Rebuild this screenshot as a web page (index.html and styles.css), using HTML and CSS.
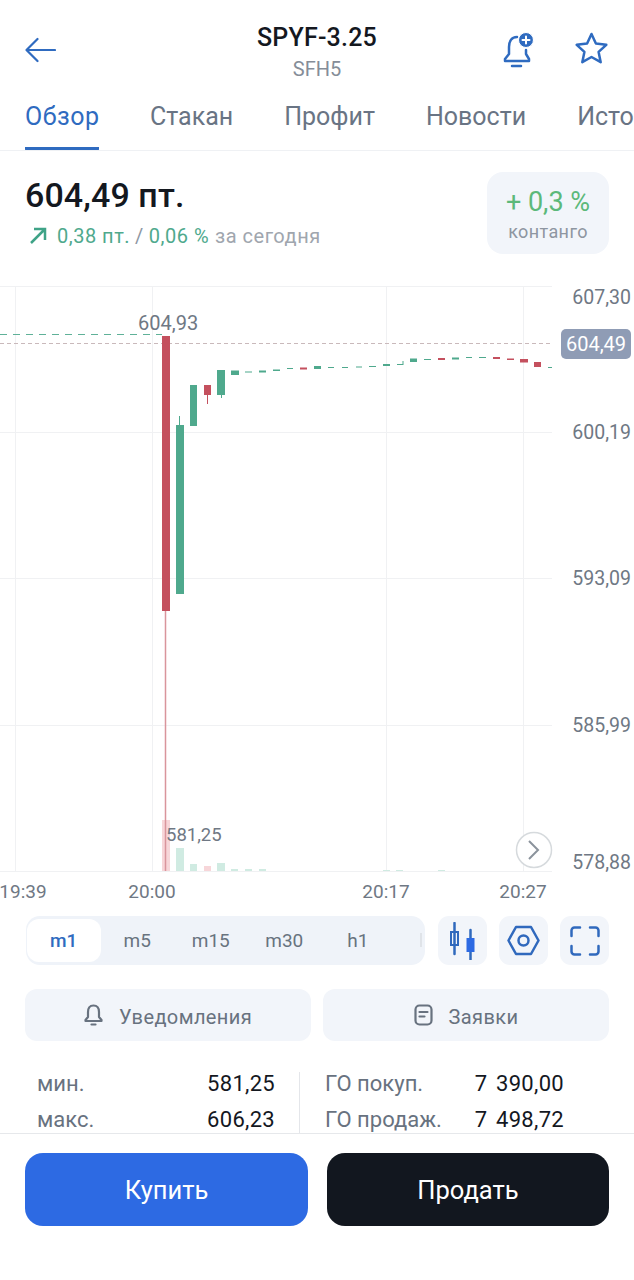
FILE: index.html
```html
<!DOCTYPE html>
<html lang="ru">
<head>
    <meta charset="UTF-8">
    <meta name="viewport" content="width=device-width, initial-scale=1.0">
    <title>SPYF-3.25</title>
    <link rel="stylesheet" href="styles.css">
</head>
<body>
    <header class="topbar">
        <svg class="back" width="31" height="26" viewBox="0 0 31 26">
            <path d="M30 13H1.500M12.500 2L1.500 13l11 11"/>
        </svg>
        <div class="topbar-title">
            <div class="ticker">SPYF-3.25</div>
            <div class="code">SFH5</div>
        </div>
        <div class="topbar-icons">
            <svg class="ico" width="32" height="36" viewBox="0 0 32 36">
                <path d="M15 5C9 5 7 10 7 15v7l-4 5v2h24v-2l-3-5v-4"/>
                <path d="M10 34h9"/>
                <circle class="plus-bg" cx="24" cy="8" r="7.500"/>
                <path class="plus" d="M24 4.500v7M20.500 8h7"/>
            </svg>
            <svg class="ico" width="33" height="32" viewBox="0 0 33 32">
                <path d="M16.500 2l4.400 9.600 10.400 1.200-7.700 7.100 2.100 10.300-9.200-5.200-9.200 5.200 2.100-10.300-7.700-7.100 10.400-1.200z"/>
            </svg>
        </div>
    </header>

    <nav class="tabs">
        <div class="tab active">Обзор</div>
        <div class="tab">Стакан</div>
        <div class="tab">Профит</div>
        <div class="tab">Новости</div>
        <div class="tab">Исто</div>
    </nav>

    <section class="quote">
        <div>
            <div class="price">604,49 пт.</div>
            <div class="change">
                <svg class="arrow" width="18" height="18" viewBox="0 0 18 18">
                    <path d="M2 16L16 2M5 2h11v11"/>
                </svg>
                <span class="up">0,38 пт.</span>
                <span class="slash">/</span>
                <span class="up">0,06 %</span>
                <span class="muted">за сегодня</span>
            </div>
        </div>
        <div class="contango">
            <div class="contango-val">+ 0,3 %</div>
            <div class="contango-label">контанго</div>
        </div>
    </section>

    <section class="chart">
        <!-- viewBox y starts at 270, so y values are page pixels -->
        <svg class="chart-svg" width="634" height="635" viewBox="0 270 634 635">
            <g class="grid">
                <path d="M0 286.500H552M0 432.500H552M0 578.500H552M0 725.500H552M0 871.500H552"/>
                <path d="M15.500 286V871M152.500 286V871M386.500 286V871M523.500 286V871"/>
            </g>

            <!-- volume -->
            <g class="vol-red">
                <rect x="162" y="820" width="8" height="51"/>
                <rect x="204" y="866" width="7" height="5"/>
            </g>
            <g class="vol-green">
                <rect x="176" y="848" width="8" height="23"/>
                <rect x="190" y="864" width="7" height="7"/>
                <rect x="217" y="863" width="8" height="8"/>
                <rect x="231" y="869" width="7" height="2"/>
                <rect x="245" y="869" width="7" height="2"/>
                <rect x="259" y="869" width="7" height="2"/>
                <rect x="383" y="870" width="7" height="1"/>
                <rect x="396" y="870" width="7" height="1"/>
                <rect x="438" y="870" width="7" height="1"/>
            </g>

            <path class="last-line" d="M0 343.500H552"/>
            <path class="high-line" d="M0 334.500H162"/>

            <!-- wicks -->
            <path class="wick-pale" d="M165.500 610V871"/>
            <path class="wick-green" d="M179.500 416V426M221.500 395V398M403 361V365"/>
            <path class="wick-red" d="M207.500 395V404"/>

            <g class="candle-red">
                <rect x="162" y="336" width="8" height="275"/>
                <rect x="204" y="385" width="7" height="10"/>
                <rect x="300" y="367.500" width="7" height="2"/>
                <rect x="438" y="358" width="7" height="2"/>
                <rect x="493" y="357" width="7" height="2"/>
                <rect x="507" y="358.500" width="7" height="1.500"/>
                <rect x="520" y="359" width="8" height="3.500"/>
                <rect x="534" y="362" width="7" height="5"/>
            </g>
            <g class="candle-green">
                <rect x="176" y="425" width="8" height="169"/>
                <rect x="190" y="385" width="7" height="41"/>
                <rect x="217" y="370" width="8" height="25"/>
                <rect x="231" y="370.500" width="8" height="4.500"/>
                <rect x="245" y="371.500" width="7" height="1"/>
                <rect x="259" y="370.500" width="7" height="2"/>
                <rect x="273" y="369.500" width="7" height="1.500"/>
                <rect x="287" y="368" width="6" height="1"/>
                <rect x="314" y="366" width="7" height="3"/>
                <rect x="328" y="367" width="6" height="1"/>
                <rect x="342" y="367" width="6" height="1"/>
                <rect x="356" y="366.500" width="6" height="1"/>
                <rect x="369" y="366" width="7" height="1"/>
                <rect x="383" y="364" width="7" height="2"/>
                <rect x="397" y="364" width="6" height="1"/>
                <rect x="410" y="358.500" width="7" height="3.500"/>
                <rect x="424" y="359" width="7" height="1"/>
                <rect x="452" y="357.500" width="7" height="2"/>
                <rect x="466" y="357" width="6" height="1"/>
                <rect x="479" y="357" width="7" height="1"/>
                <rect x="548" y="367" width="4" height="1"/>
            </g>

            <text class="mark" x="138" y="330">604,93</text>
            <text class="mark-low" x="166" y="841">581,25</text>

            <g class="axis-y">
                <text x="631" y="304">607,30</text>
                <text x="631" y="439">600,19</text>
                <text x="631" y="585">593,09</text>
                <text x="631" y="732">585,99</text>
                <text x="631" y="869">578,88</text>
            </g>
            <rect class="last-box" x="561" y="329" width="70" height="30" rx="5"/>
            <text class="last-text" x="596" y="351">604,49</text>

            <g class="axis-x">
                <text x="23" y="898">19:39</text>
                <text x="152" y="898">20:00</text>
                <text x="386" y="898">20:17</text>
                <text x="523" y="898">20:27</text>
            </g>

            <circle class="go-end" cx="534" cy="850" r="17.500"/>
            <path class="go-end-arrow" d="M529 841l9 9-9 9"/>
        </svg>
    </section>

    <section class="controls">
        <div class="periods">
            <div class="period active">m1</div>
            <div class="period">m5</div>
            <div class="period">m15</div>
            <div class="period">m30</div>
            <div class="period">h1</div>
            <div class="period-more"></div>
        </div>
        <div class="tool">
            <svg width="27" height="38" viewBox="0 0 27 38">
                <path d="M5.500 1v31M21.500 8v30"/>
                <rect class="hollow" x="2" y="10" width="7" height="13"/>
                <rect class="solid" x="17.500" y="16" width="8" height="14"/>
            </svg>
        </div>
        <div class="tool">
            <svg width="33" height="31" viewBox="0 0 33 31">
                <path d="M9 2h15l7.500 13.500L24 29H9L1.500 15.500z"/>
                <circle cx="16.500" cy="15.500" r="5"/>
            </svg>
        </div>
        <div class="tool">
            <svg width="30" height="30" viewBox="0 0 30 30">
                <path d="M10 1.500H4.500a3 3 0 0 0-3 3V10M20 1.500h5.500a3 3 0 0 1 3 3V10M10 28.500H4.500a3 3 0 0 1-3-3V20M20 28.500h5.500a3 3 0 0 0 3-3V20"/>
            </svg>
        </div>
    </section>

    <section class="actions">
        <div class="action">
            <svg width="19" height="22" viewBox="0 0 19 22">
                <path d="M9.500 1.500C5.500 1.500 4 4.500 4 8v5l-2.500 3v1h16v-1L15 13V8c0-3.500-1.500-6.500-5.500-6.500z"/>
                <path d="M7.500 20.500h4"/>
            </svg>
            <span class="action-text">Уведомления</span>
        </div>
        <div class="action">
            <svg width="19" height="22" viewBox="0 0 19 22">
                <rect x="1.500" y="1.500" width="16" height="19" rx="4"/>
                <path d="M5.500 8h8M5.500 12.500h5"/>
            </svg>
            <span class="action-text">Заявки</span>
        </div>
    </section>

    <section class="stats">
        <div class="stats-col left">
            <div class="stat"><span>мин.</span><b>581,25</b></div>
            <div class="stat"><span>макс.</span><b>606,23</b></div>
        </div>
        <div class="stats-col right">
            <div class="stat"><span>ГО покуп.</span><b>7 390,00</b></div>
            <div class="stat"><span>ГО продаж.</span><b>7 498,72</b></div>
        </div>
    </section>

    <footer class="trade">
        <button class="trade-btn buy">Купить</button>
        <button class="trade-btn sell">Продать</button>
    </footer>
</body>
</html>
```

FILE: styles.css
```css
body {
    margin: 0;
    width: 634px;
    height: 1280px;
    overflow: hidden;
    background: #fff;
    color: #14181f;
    font-family: Roboto, 'Liberation Sans', sans-serif;
}

svg {
    display: block;
}

/* top bar */
.topbar {
    display: flex;
    align-items: flex-start;
    justify-content: space-between;
    height: 88px;
    padding: 22px 26px 0 25px;
    box-sizing: border-box;
    position: relative;
}

.back {
    margin-top: 15px;
}

.back path {
    fill: none;
    stroke: #2f6bc0;
    stroke-width: 2.200;
    stroke-linecap: round;
    stroke-linejoin: round;
}

.ico path,
.ico circle {
    fill: none;
    stroke: #2f6bc0;
    stroke-width: 2.500;
    stroke-linecap: round;
    stroke-linejoin: round;
}

.ico circle.plus-bg {
    fill: #2f6bc0;
    stroke: #fff;
    stroke-width: 1;
}

.ico path.plus {
    stroke: #fff;
    stroke-width: 2;
}

.topbar-title {
    position: absolute;
    left: 0;
    right: 0;
    top: 23px;
    text-align: center;
}

.ticker {
    font-size: 25px;
    font-weight: 500;
    line-height: 30px;
    letter-spacing: 0.2px;
}

.code {
    margin-top: 4px;
    font-size: 20px;
    line-height: 24px;
    color: #858d98;
}

.topbar-icons {
    display: flex;
    gap: 41px;
    margin-top: 10px;
}

/* tabs */
.tabs {
    display: flex;
    gap: 51px;
    height: 63px;
    padding-left: 25px;
    box-sizing: border-box;
    border-bottom: 1px solid #eff1f4;
    overflow: hidden;
    white-space: nowrap;
}

.tab {
    height: 63px;
    box-sizing: border-box;
    padding-top: 14px;
    font-size: 25px;
    line-height: 30px;
    color: #697484;
}

.tab.active {
    width: 74px;
    letter-spacing: 0.5px;
    color: #2f6bc0;
    border-bottom: 4px solid #2f6bc0;
    border-radius: 0 0 2px 2px;
}

/* price block */
.quote {
    display: flex;
    justify-content: space-between;
    height: 119px;
    padding: 20px 25px 0;
    box-sizing: border-box;
}

.price {
    margin-top: 5px;
    font-size: 34px;
    font-weight: 500;
    line-height: 38px;
    letter-spacing: 0.1px;
}

.change {
    display: flex;
    align-items: center;
    gap: 5px;
    margin-top: 10px;
    font-size: 20px;
    line-height: 24px;
    letter-spacing: 0.5px;
}

.arrow {
    margin: 0 5px 0 4px;
}

.arrow path {
    fill: none;
    stroke: #3fa387;
    stroke-width: 2.500;
}

.up {
    color: #4fa98d;
}

.slash {
    color: #8e97a3;
}

.muted {
    margin-left: 1px;
    color: #a0a6ae;
}

.contango {
    width: 122px;
    height: 82px;
    margin-top: 1px;
    border-radius: 16px;
    background: #f2f5fa;
    text-align: center;
}

.contango-val {
    margin-top: 15px;
    font-size: 27px;
    line-height: 31px;
    color: #5cb97a;
}

.contango-label {
    margin-top: 4px;
    font-size: 18px;
    line-height: 20px;
    letter-spacing: 0.4px;
    color: #8e96a1;
}

/* chart */
.chart {
    height: 646px;
}

.grid path {
    fill: none;
    stroke: #f0f1f3;
    stroke-width: 1;
}

.vol-red rect {
    fill: #f7d6d9;
}

.vol-green rect {
    fill: #d0ebe2;
}

.last-line {
    fill: none;
    stroke: #c9b9bb;
    stroke-width: 1;
    stroke-dasharray: 4 3;
}

.high-line {
    fill: none;
    stroke: #5fb198;
    stroke-width: 1;
    stroke-dasharray: 7 6;
}

.wick-pale {
    stroke: #d9959c;
    stroke-width: 1.500;
}

.wick-green {
    stroke: #4fa98d;
    stroke-width: 1;
}

.wick-red {
    stroke: #c4505e;
    stroke-width: 1;
}

.candle-red rect {
    fill: #c4505e;
}

.candle-green rect {
    fill: #4fa98d;
}

.mark {
    font-size: 20px;
    fill: #6f7884;
}

.mark-low {
    font-size: 18.500px;
    fill: #6f7884;
}

.axis-y text {
    font-size: 19.500px;
    fill: #6f7884;
    text-anchor: end;
}

.axis-x text {
    font-size: 19px;
    fill: #6f7884;
    text-anchor: middle;
}

.last-box {
    fill: #8f9cb5;
}

.last-text {
    font-size: 20px;
    fill: #fff;
    text-anchor: middle;
}

.go-end {
    fill: #fff;
    stroke: #d6dadd;
    stroke-width: 1.500;
}

.go-end-arrow {
    fill: none;
    stroke: #8b939c;
    stroke-width: 2;
}

/* period selector and tool buttons */
.controls {
    display: flex;
    padding: 0 25px 0 26px;
    height: 49px;
}

.periods {
    display: flex;
    align-items: center;
    width: 399px;
    height: 49px;
    margin-right: 13px;
    padding-left: 1px;
    box-sizing: border-box;
    border-radius: 14px;
    background: #eff3f9;
    position: relative;
}

.period {
    width: 73.500px;
    font-size: 19px;
    text-align: center;
    color: #68737f;
}

.period.active {
    height: 43px;
    line-height: 43px;
    border-radius: 12px;
    background: #fff;
    color: #2f6bc0;
    font-weight: 500;
}

.period-more {
    position: absolute;
    right: 3px;
    top: 17px;
    width: 2px;
    height: 14px;
    background: #dfe3e8;
}

.tool {
    display: flex;
    align-items: center;
    justify-content: center;
    width: 49px;
    height: 49px;
    margin-right: 12px;
    border-radius: 11px;
    background: #f2f5fa;
}

.tool:last-child {
    margin-right: 0;
}

.tool path,
.tool circle {
    fill: none;
    stroke: #3069bd;
    stroke-width: 2.500;
    stroke-linecap: round;
    stroke-linejoin: round;
}

.tool .hollow {
    fill: none;
    stroke: #3069bd;
    stroke-width: 2;
}

.tool .solid {
    fill: #2d6ae3;
}

/* alerts and orders */
.actions {
    display: flex;
    gap: 12px;
    margin-top: 24px;
    padding: 0 25px;
}

.action {
    flex: 1;
    display: flex;
    align-items: center;
    justify-content: center;
    gap: 16px;
    height: 52px;
    border-radius: 12px;
    background: #f2f5fa;
    font-size: 20px;
    letter-spacing: 0.4px;
    color: #68727f;
}

.action-text {
    margin-top: 3px;
}

.action svg * {
    fill: none;
    stroke: #68727f;
    stroke-width: 2.200;
    stroke-linecap: round;
    stroke-linejoin: round;
}

/* stats */
.stats {
    display: flex;
    height: 61px;
    margin-top: 31px;
    overflow: hidden;
}

.stats-col {
    box-sizing: border-box;
}

.stats-col.left {
    width: 300px;
    padding: 0 24px 0 37px;
    border-right: 1px solid #e4e6ea;
}

.stats-col.right {
    width: 264px;
    padding-left: 25px;
}

.stat {
    display: flex;
    justify-content: space-between;
    height: 36px;
    font-size: 22px;
    line-height: 24px;
}

.stat span {
    color: #68727f;
}

.stat b {
    font-weight: 400;
    letter-spacing: 0.3px;
    word-spacing: 3px;
    color: #14181f;
}

/* buy and sell */
.trade {
    display: flex;
    gap: 19px;
    padding: 19px 25px 0;
    border-top: 1px solid #e6e8eb;
}

.trade-btn {
    height: 73px;
    border: none;
    border-radius: 18px;
    font-family: inherit;
    font-size: 25.500px;
    color: #fff;
}

.buy {
    width: 283px;
    background: #2d6ae3;
}

.sell {
    flex: 1;
    background: #12171f;
}
```
